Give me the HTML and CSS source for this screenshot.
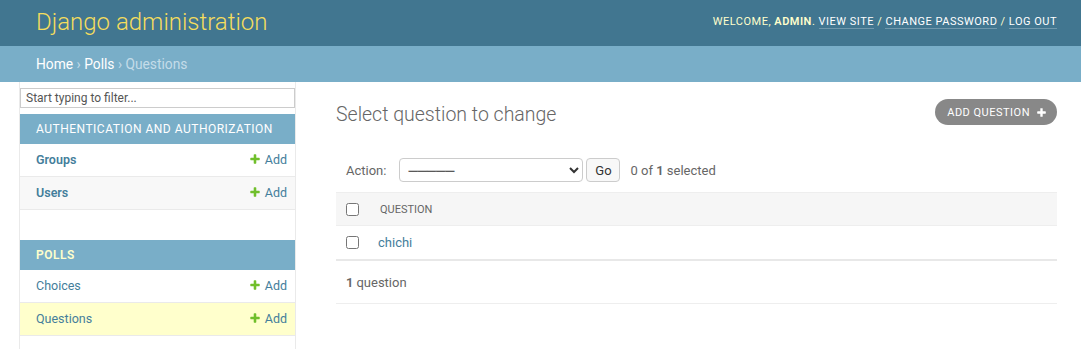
FILE: index.html
```html
<!DOCTYPE html>
<html lang="en">
  <head>
    <meta charset="UTF-8" />
    <title>Select question to change | Django site admin</title>
    <link rel="stylesheet" href="styles.css">
  </head>
  <body>
    <div id="header">
      <div id="branding">Django administration</div>
      <div id="user-tools">
        Welcome, <strong>admin</strong>.
        <a href="#">View site</a> /
        <a href="#">Change password</a> /
        <a href="#">Log out</a>
      </div>
    </div>

    <div class="breadcrumbs">
      <a href="#">Home</a> &rsaquo; <a href="#">Polls</a> &rsaquo; Questions
    </div>

    <div class="main">
      <div class="toggle-nav-sidebar"></div>

      <nav id="nav-sidebar">
        <input type="search" id="nav-filter" placeholder="Start typing to filter...">

        <div class="module">
          <div class="caption">Authentication and Authorization</div>
          <div class="model-row">
            <a class="model-name bold" href="#">Groups</a>
            <a class="addlink" href="#">
              <svg width="12" height="12" viewBox="0 0 1792 1792"><path fill="#70bf2b" d="M1600 796v192q0 40-28 68t-68 28h-416v416q0 40-28 68t-68 28h-192q-40 0-68-28t-28-68v-416h-416q-40 0-68-28t-28-68v-192q0-40 28-68t68-28h416v-416q0-40 28-68t68-28h192q40 0 68 28t28 68v416h416q40 0 68 28t28 68z"/></svg>
              Add
            </a>
          </div>
          <div class="model-row alt">
            <a class="model-name bold" href="#">Users</a>
            <a class="addlink" href="#">
              <svg width="12" height="12" viewBox="0 0 1792 1792"><path fill="#70bf2b" d="M1600 796v192q0 40-28 68t-68 28h-416v416q0 40-28 68t-68 28h-192q-40 0-68-28t-28-68v-416h-416q-40 0-68-28t-28-68v-192q0-40 28-68t68-28h416v-416q0-40 28-68t68-28h192q40 0 68 28t28 68v416h416q40 0 68 28t28 68z"/></svg>
              Add
            </a>
          </div>
        </div>

        <div class="module current-app">
          <div class="caption">Polls</div>
          <div class="model-row">
            <a class="model-name" href="#">Choices</a>
            <a class="addlink" href="#">
              <svg width="12" height="12" viewBox="0 0 1792 1792"><path fill="#70bf2b" d="M1600 796v192q0 40-28 68t-68 28h-416v416q0 40-28 68t-68 28h-192q-40 0-68-28t-28-68v-416h-416q-40 0-68-28t-28-68v-192q0-40 28-68t68-28h416v-416q0-40 28-68t68-28h192q40 0 68 28t28 68v416h416q40 0 68 28t28 68z"/></svg>
              Add
            </a>
          </div>
          <div class="model-row current-model">
            <a class="model-name" href="#">Questions</a>
            <a class="addlink" href="#">
              <svg width="12" height="12" viewBox="0 0 1792 1792"><path fill="#70bf2b" d="M1600 796v192q0 40-28 68t-68 28h-416v416q0 40-28 68t-68 28h-192q-40 0-68-28t-28-68v-416h-416q-40 0-68-28t-28-68v-192q0-40 28-68t68-28h416v-416q0-40 28-68t68-28h192q40 0 68 28t28 68v416h416q40 0 68 28t28 68z"/></svg>
              Add
            </a>
          </div>
        </div>
      </nav>

      <div class="content">
        <div class="content-head">
          <h1>Select question to change</h1>
          <a class="addbutton" href="#">
            Add question
            <svg width="11" height="11" viewBox="0 0 1792 1792"><path fill="#fff" d="M1600 796v192q0 40-28 68t-68 28h-416v416q0 40-28 68t-68 28h-192q-40 0-68-28t-28-68v-416h-416q-40 0-68-28t-28-68v-192q0-40 28-68t68-28h416v-416q0-40 28-68t68-28h192q40 0 68 28t28 68v416h416q40 0 68 28t28 68z"/></svg>
          </a>
        </div>

        <div class="actions">
          <label for="action">Action:</label>
          <select id="action">
            <option>─────</option>
          </select>
          <button class="go">Go</button>
          <span class="counter">0 of <strong>1</strong> selected</span>
        </div>

        <table class="result-list">
          <thead>
            <tr>
              <th class="check"><input type="checkbox"></th>
              <th>Question</th>
            </tr>
          </thead>
          <tbody>
            <tr>
              <td class="check"><input type="checkbox"></td>
              <td class="title"><a href="#">chichi</a></td>
            </tr>
          </tbody>
        </table>

        <p class="paginator"><strong>1</strong> question</p>
      </div>
    </div>
  </body>
</html>
```

FILE: styles.css
```css
body {
  margin: 0;
  font-family: Roboto, "Liberation Sans", sans-serif;
  font-size: 13px;
  color: #333;
  background: #fff;
}
a {
  text-decoration: none;
  color: #447e9b;
}

#header {
  height: 46px;
  box-sizing: border-box;
  padding: 0 24px 0 36px;
  background: #417690;
  display: flex;
  align-items: center;
  justify-content: space-between;
}
#branding {
  font-size: 24px;
  font-weight: 300;
  color: #f5dd5d;
  margin-top: -2px;
}
#user-tools {
  font-size: 11px;
  letter-spacing: 0.5px;
  text-transform: uppercase;
  color: #ffc;
  margin-top: -4px;
}
#user-tools strong {
  font-weight: 600;
}
#user-tools a {
  color: #fff;
  border-bottom: 1px solid rgba(255, 255, 255, 0.25);
}

.breadcrumbs {
  height: 36px;
  line-height: 36px;
  padding: 0 36px;
  background: #79aec8;
  color: #c4dce8;
  font-size: 13.8px;
}
.breadcrumbs a {
  color: #fff;
}

.main {
  display: flex;
}
.toggle-nav-sidebar {
  flex: 0 0 19px;
  border-right: 1px solid #eaeaea;
}
#nav-sidebar {
  flex: 0 0 275px;
  border-right: 1px solid #eaeaea;
}
#nav-filter {
  display: block;
  width: 100%;
  box-sizing: border-box;
  height: 20px;
  margin: 6px 0;
  padding: 0 5px;
  border: 1px solid #ccc;
  font-family: inherit;
  font-size: 12px;
  color: #333;
  outline: none;
}
#nav-filter::placeholder {
  color: #555;
}
.module {
  margin-bottom: 30px;
}
.caption {
  height: 30px;
  padding-left: 16px;
  display: flex;
  align-items: center;
  background: #79aec8;
  color: #fff;
  font-size: 12px;
  letter-spacing: 0.5px;
  text-transform: uppercase;
}
.current-app .caption {
  color: #ffc;
  font-weight: 600;
}
.model-row {
  height: 32px;
  padding: 0 8px 0 16px;
  border-bottom: 1px solid #eaeaea;
  display: flex;
  align-items: center;
  justify-content: space-between;
}
.model-row.alt {
  background: #f8f8f8;
}
.model-row.current-model {
  background: #ffc;
}
.model-name {
  font-size: 12.5px;
  margin-top: -2px;
}
.model-name.bold {
  font-weight: 600;
}
.addlink {
  display: flex;
  align-items: center;
  gap: 4px;
  font-size: 12.5px;
  margin-top: -2px;
}

.content {
  flex: 1;
  padding: 18px 24px 0 40px;
}
.content-head {
  display: flex;
  justify-content: space-between;
  align-items: flex-start;
}
h1 {
  margin: 3px 0 0;
  font-size: 19.5px;
  font-weight: 300;
  color: #666;
}
.addbutton {
  display: flex;
  align-items: center;
  gap: 6px;
  height: 26px;
  padding: 0 10px 0 12px;
  border-radius: 13px;
  background: #888;
  color: #fff;
  font-size: 11px;
  letter-spacing: 0.5px;
  text-transform: uppercase;
  margin-top: -1px;
}

.actions {
  margin-top: 32px;
  padding: 0 10px;
  display: flex;
  align-items: center;
  height: 24px;
  color: #666;
}
.actions label {
  margin-right: 13px;
}
.actions select {
  width: 184px;
  height: 24px;
  border: 1px solid #ccc;
  border-radius: 4px;
  background: #fff;
  font-family: inherit;
  font-size: 13px;
  color: #333;
  padding: 0 4px;
}
.go {
  margin-left: 3px;
  height: 24px;
  width: 34px;
  border: 1px solid #ccc;
  border-radius: 4px;
  background: #f8f8f8;
  font-family: inherit;
  font-size: 13px;
  color: #333;
  padding: 0;
}
.counter {
  margin-left: 10px;
}
.counter strong {
  font-weight: 600;
}

.result-list {
  width: 100%;
  margin-top: 10px;
  border-collapse: collapse;
}
.result-list thead th {
  height: 32px;
  background: #f6f6f6;
  border-top: 1px solid #eee;
  border-bottom: 1px solid #eee;
  text-align: left;
  font-size: 11px;
  font-weight: 400;
  text-transform: uppercase;
  color: #666;
  padding: 0 8px;
}
.result-list td {
  height: 33px;
  padding: 0 8px;
  border-bottom: 2px solid #e8e8e8;
}
.result-list td.title {
  padding-left: 6px;
}
.result-list .check {
  width: 18px;
  padding-left: 10px;
}
.result-list input[type="checkbox"] {
  margin: 0;
  display: block;
}

.paginator {
  margin: 0;
  height: 42px;
  padding: 0 10px;
  display: flex;
  align-items: center;
  gap: 3px;
  border-bottom: 1px solid #eee;
  color: #666;
}
.paginator strong {
  font-weight: 600;
}
```
